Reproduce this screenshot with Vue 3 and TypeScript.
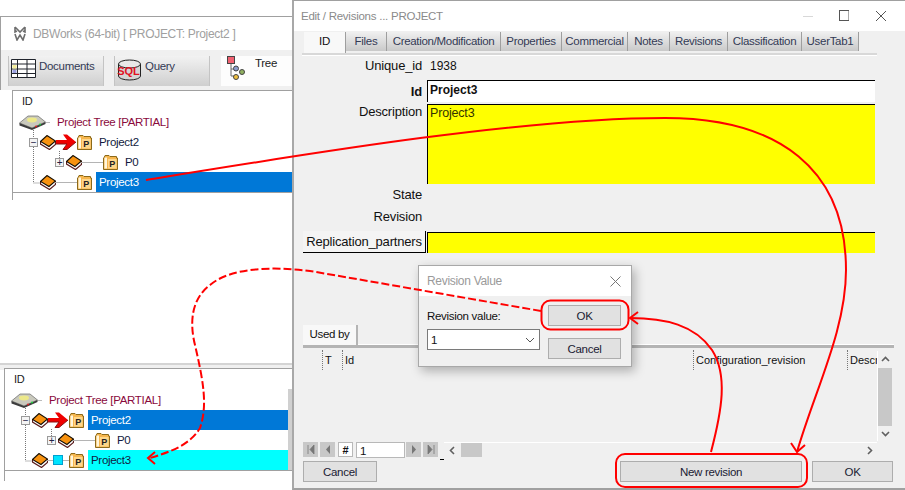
<script setup lang="ts">
type TreeRow = {
  label: string
  level: number
  expander?: '+' | '-'
  link: 'arrow' | 'line' | 'cyan'
  state?: 'selected' | 'marked'
}

const upperRows: TreeRow[] = [
  { label: 'Project2', level: 0, expander: '-', link: 'arrow' },
  { label: 'P0', level: 1, expander: '+', link: 'line' },
  { label: 'Project3', level: 0, link: 'line', state: 'selected' },
]

const lowerRows: TreeRow[] = [
  { label: 'Project2', level: 0, expander: '-', link: 'arrow', state: 'selected' },
  { label: 'P0', level: 1, expander: '+', link: 'line' },
  { label: 'Project3', level: 0, link: 'cyan', state: 'marked' },
]

const trees = [
  { key: 'upper', rows: upperRows },
  { key: 'lower', rows: lowerRows },
]

const tabs = [
  { label: 'ID', width: 42 },
  { label: 'Files', width: 41 },
  { label: 'Creation/Modification', width: 114 },
  { label: 'Properties', width: 61 },
  { label: 'Commercial', width: 66 },
  { label: 'Notes', width: 42 },
  { label: 'Revisions', width: 58 },
  { label: 'Classification', width: 74 },
  { label: 'UserTab1', width: 57 },
]
</script>

<template>
  <div class="screen">
    <!-- shared icons -->
    <svg class="sprite" aria-hidden="true">
      <defs>
        <symbol id="book" viewBox="0 0 16 15">
          <path d="M.5 6.500 V9 L9.500 14.500 L15.500 9.500 V6.500 Z" fill="#fff" stroke="#5a1c1c" stroke-width="1.200" />
          <path d="M.5 6.500 L7 .5 L15.500 6 L9 11.500 Z" fill="#f8920f" stroke="#140e04" stroke-width="1.100" />
        </symbol>
        <symbol id="folder" viewBox="0 0 15 15">
          <path d="M.5 3 V14.500 H14.500 V3 H13.500 V1.500 H7 L6 .5 H2 L1 3 Z" fill="#f6b64e" stroke="#8c6a1a" />
          <path d="M1.500 2.500 H4 V13.500 H1.500 Z" fill="#fff6dc" />
          <rect x="5" y="4" width="8.500" height="9.500" fill="#fdd68a" />
          <text x="9.200" y="12.300" text-anchor="middle" class="folder-p">P</text>
        </symbol>
        <symbol id="drive" viewBox="0 0 27 15">
          <path d="M.5 8 L9 1 H19 L26.500 7 L13 13 Z" fill="#c9c9bd" stroke="#666" stroke-width=".7" />
          <path d="M.5 8 L13 13 L26.500 7 V9 L13 15 L.5 10.500 Z" fill="#3c3c3c" />
          <ellipse cx="13" cy="5" rx="5" ry="2.400" fill="#ece88a" />
          <circle cx="17" cy="11.500" r="1" fill="#e02020" />
          <circle cx="21" cy="9.500" r="1" fill="#20d040" />
        </symbol>
      </defs>
    </svg>

    <!-- main application window, top left -->
    <section class="app-window">
      <header class="app-title">
        <svg class="logo" viewBox="0 0 14 15" width="14" height="15">
          <path d="M2 1 L7 6 L12 1 M2 1 V6 L4 5 M12 1 V6 L10 5 M2 8 L4 14 L7 9 L10 14 L12 8" fill="none" stroke="#6d6d6d" stroke-width="1.600" />
        </svg>
        <span>DBWorks (64-bit) [ PROJECT: Project2 ]</span>
      </header>
      <nav class="toolbar">
        <div class="tool">
          <svg viewBox="0 0 25 19" width="25" height="19">
            <path d="M.5 .5 H24.500 V18.500 H.5 Z M.5 5 H24.500 M.5 10 H24.500 M.5 14.500 H24.500 M6.500 .5 V18.500 M16 .5 V18.500" fill="#fff" stroke="#20242c" />
            <rect x="1.500" y="6" width="4" height="3.500" fill="#f4ee9a" />
            <rect x="1.500" y="11" width="4" height="3" fill="#9aa0e0" />
          </svg>
          <span>Documents</span>
        </div>
        <div class="tool">
          <svg viewBox="0 0 25 22" width="25" height="22">
            <ellipse cx="12.500" cy="17" rx="11" ry="4" fill="#d4d4d4" stroke="#222" />
            <rect x="1.500" y="5" width="22" height="12" fill="#d4d4d4" />
            <path d="M1.500 5 V17 M23.500 5 V17" stroke="#222" />
            <ellipse cx="12.500" cy="5" rx="11" ry="4" fill="#e8e8e8" stroke="#222" />
            <text x="11.500" y="16" text-anchor="middle" class="sql">SQL</text>
          </svg>
          <span>Query</span>
        </div>
        <div class="tool tool--active">
          <svg viewBox="0 0 18 26" width="18" height="26">
            <path d="M4 6 V20 H9 M4 13 H9" fill="none" stroke="#666" />
            <rect x=".5" y=".5" width="7" height="7" fill="#f06070" stroke="#444" />
            <circle cx="9" cy="12.500" r="2.500" fill="#8c9ccc" stroke="#444" />
            <circle cx="15" cy="16" r="2.500" fill="#90b060" stroke="#444" />
            <circle cx="9" cy="21" r="2.500" fill="#f0c040" stroke="#444" />
          </svg>
          <span>Tree</span>
        </div>
      </nav>
    </section>

    <!-- lower window frame, only the tree is visible -->
    <section class="lower-window"></section>

    <div v-for="tree in trees" :key="tree.key" class="tree-wrap" :class="`tree-wrap--${tree.key}`">
      <div class="tree">
        <div class="tree-head">ID</div>
        <div class="tree-root">
          <svg class="drive"><use href="#drive" /></svg>
          <i class="root-dash"></i>
          <span>Project Tree [PARTIAL]</span>
        </div>
        <div
          v-for="row in tree.rows"
          :key="row.label"
          class="tree-row"
          :style="{ paddingLeft: `${16 + row.level * 26}px` }"
        >
          <span class="expander" :class="{ 'expander--none': !row.expander }">
            <template v-if="row.expander">{{ row.expander === '-' ? '−' : '+' }}</template>
          </span>
          <svg class="book"><use href="#book" /></svg>
          <span class="link">
            <svg v-if="row.link === 'arrow'" viewBox="0 0 22 16" width="22" height="16">
              <path d="M1 6 H12 L8 0.5 L12 0.5 L21 8 L12 15.500 L8 15.500 L12 10 H1 Z" fill="#ee0000" />
              <path d="M1 10 H12 L8 15.500 L12 15.500 L21 8" fill="none" stroke="#8a1010" />
            </svg>
            <i v-else-if="row.link === 'line'" class="link-line"></i>
            <template v-else>
              <i class="link-dash"></i>
              <i class="link-cyan"></i>
              <i class="link-dash link-dash--after"></i>
            </template>
          </span>
          <svg class="folder"><use href="#folder" /></svg>
          <span class="tree-label" :class="row.state ? `tree-label--${row.state}` : ''">{{ row.label }}</span>
        </div>
        <svg class="tree-dots" width="70" height="102">
          <path d="M20.500 39 V47 M20.500 56 V92 H27 M46.500 60 V68" fill="none" stroke="#777" stroke-dasharray="1 1" />
        </svg>
      </div>
    </div>

    <!-- Edit / Revisions dialog -->
    <section class="edit-window">
      <header class="edit-title">
        <span>Edit / Revisions ... PROJECT</span>
        <div class="caption">
          <svg viewBox="0 0 46 12" width="46" height="12">
            <path d="M0 6.500 H10" stroke="#d8d8d8" />
            <rect x="36.500" y=".5" width="9.500" height="10" fill="none" stroke="#555" />
          </svg>
          <svg viewBox="0 0 12 12" width="12" height="12"><path d="M1 1 L11 11 M11 1 L1 11" stroke="#555" /></svg>
        </div>
      </header>

      <div class="tabs">
        <div
          v-for="(tab, i) in tabs"
          :key="tab.label"
          class="tab"
          :class="{ 'tab--active': i === 0 }"
          :style="{ width: `${tab.width}px` }"
        >{{ tab.label }}</div>
      </div>

      <div class="form">
        <label class="form-label form-label--first">Unique_id</label>
        <span class="form-value form-label--first">1938</span>
        <label class="form-label"><b>Id</b></label>
        <div class="field field--id">Project3</div>
        <label class="form-label form-label--desc">Description</label>
        <div class="field field--desc">Project3</div>
        <label class="form-label">State</label>
        <span></span>
        <label class="form-label">Revision</label>
        <span></span>
        <button class="partners">Replication_partners</button>
        <div class="field field--partners"></div>
      </div>

      <div class="used-tabs"><div class="used-tab">Used by</div></div>

      <div class="grid-area">
        <div class="grid-body">
          <div class="grid-head">
            <span class="col" style="width: 20px">T</span>
            <span class="col" style="width: 351px">Id</span>
            <span class="col" style="width: 154px">Configuration_revision</span>
            <span class="col col--last">Descr</span>
          </div>
        </div>
        <div class="vscroll">
          <svg viewBox="0 0 9 6" width="9" height="6"><path d="M1 5 L4.500 1.500 L8 5" fill="none" stroke="#606060" stroke-width="1.600" /></svg>
          <i class="vthumb"></i>
          <svg viewBox="0 0 9 6" width="9" height="6"><path d="M1 1 L4.500 4.500 L8 1" fill="none" stroke="#606060" stroke-width="1.600" /></svg>
        </div>
      </div>

      <div class="nav-row">
        <button class="nav-btn"><svg viewBox="0 0 8 9" width="8" height="9"><path d="M1 0 V9 M7 0 L3 4.500 L7 9 Z" fill="#777" stroke="#777" stroke-width=".8" /></svg></button>
        <button class="nav-btn nav-btn--prev"><svg viewBox="0 0 6 9" width="6" height="9"><path d="M5 0 L1 4.500 L5 9 Z" fill="#777" /></svg></button>
        <span class="nav-hash">#</span>
        <span class="nav-input">1</span>
        <button class="nav-btn"><svg viewBox="0 0 6 9" width="6" height="9"><path d="M1 0 L5 4.500 L1 9 Z" fill="#777" /></svg></button>
        <button class="nav-btn nav-btn--last"><svg viewBox="0 0 8 9" width="8" height="9"><path d="M7 0 V9 M1 0 L5 4.500 L1 9 Z" fill="#777" stroke="#777" stroke-width=".8" /></svg></button>
        <i class="nav-tick"></i>
        <div class="hscroll">
          <svg viewBox="0 0 6 9" width="6" height="9"><path d="M5 1 L1.500 4.500 L5 8" fill="none" stroke="#606060" stroke-width="1.600" /></svg>
          <i class="hthumb"></i>
          <svg class="hscroll-end" viewBox="0 0 6 9" width="6" height="9"><path d="M1 1 L4.500 4.500 L1 8" fill="none" stroke="#606060" stroke-width="1.600" /></svg>
        </div>
      </div>

      <footer class="edit-actions">
        <button class="btn btn--cancel">Cancel</button>
        <button class="btn btn--new">New revision</button>
        <button class="btn btn--ok">OK</button>
      </footer>
    </section>

    <!-- Revision Value popup -->
    <section class="rev-dialog">
      <header class="rev-title">
        <span>Revision Value</span>
        <svg viewBox="0 0 11 11" width="11" height="11"><path d="M.5 .5 L10.500 10.500 M10.500 .5 L.5 10.500" stroke="#777" /></svg>
      </header>
      <div class="rev-body">
        <div class="rev-left">
          <label>Revision value:</label>
          <div class="combo">
            <span>1</span>
            <svg viewBox="0 0 10 6" width="10" height="6"><path d="M1 1 L5 5 L9 1" fill="none" stroke="#555" /></svg>
          </div>
        </div>
        <div class="rev-right">
          <button class="btn rev-btn">OK</button>
          <button class="btn rev-btn">Cancel</button>
        </div>
      </div>
    </section>

    <!-- red annotations on top of everything -->
    <svg class="annotations" viewBox="0 0 905 490" width="905" height="490">
      <g fill="none" stroke="#f00" stroke-width="2">
        <path d="M146 180 C300 155 520 118 665 118 C780 118 846 170 846 270 C846 330 815 390 797 452" />
        <path d="M791 443 L797 452 L805 445" />
        <path d="M711 452 C722 410 728 375 712 350 C695 325 665 318 630 318" />
        <path d="M638 312 L630 318 L638 324" />
        <path stroke-dasharray="8 3" d="M541 311 L310 271 C270 266 230 268 210 285 C190 300 190 325 195 345 C203 380 208 405 200 428 C190 445 170 452 150 458" />
        <path d="M155 452 L148 458 L155 464" />
        <rect x="541.500" y="300.500" width="87" height="29" rx="9" />
        <rect x="616" y="454" width="191" height="33" rx="9" />
      </g>
    </svg>
  </div>
</template>

<style>
body { background: #fff; }
</style>

<style scoped>
.screen {
  position: relative;
  width: 905px;
  height: 490px;
  overflow: hidden;
  background: #fff;
  font-family: "Liberation Sans", Arial, sans-serif;
  font-size: 11.5px;
  letter-spacing: -0.3px;
  color: #111;
}
.sprite { position: absolute; width: 0; height: 0; }
.folder-p { font: 700 9px "Liberation Sans", sans-serif; fill: #222; letter-spacing: 0; }
.sql { font: 700 11px "Liberation Sans", sans-serif; fill: #e01020; letter-spacing: 0; }

/* left windows */
.app-window {
  position: absolute;
  left: 0;
  top: 16px;
  width: 293px;
  height: 74px;
  border-top: 1px solid #a0a0a0;
  border-left: 1px solid #a0a0a0;
  box-sizing: border-box;
  background: #f0f0f0;
}
.app-title {
  display: flex;
  align-items: center;
  gap: 6px;
  height: 33px;
  padding-left: 12px;
  background: #fff;
  color: #a0a0a0;
  font-size: 12px;
}
.toolbar { display: flex; padding: 6px 0 0 7px; gap: 10px; }
.tool {
  display: flex;
  gap: 3px;
  width: 96px;
  height: 30px;
  padding: 3px 0 0 2px;
  box-sizing: border-box;
  background: linear-gradient(#f2f2f2, #cfcfcf);
  border-left: 1px solid #c4c4c4;
  border-right: 1px solid #c4c4c4;
  color: #333a55;
}
.tool span { padding-top: 1px; }
.tool--active { width: 72px; background: #fdfdfd; border: 0; gap: 10px; margin-left: 1px; padding: 0 0 0 6px; color: #222; }
.lower-window {
  position: absolute;
  left: 0;
  top: 363px;
  width: 293px;
  height: 5px;
  border-top: 2px solid #d4d4d4;
  background: #f0f0f0;
}
.tree-wrap {
  position: absolute;
  border-left: 1px solid #a0a0a0;
  box-sizing: border-box;
}
.tree-wrap--upper { left: 12px; top: 90px; width: 281px; height: 110px; }
.tree-wrap--lower { left: 4px; top: 368px; width: 288px; height: 113px; }
.tree {
  position: relative;
  border-top: 1px solid #a0a0a0;
  border-bottom: 1px solid #a0a0a0;
  background: #fff;
}
.tree-wrap--lower::after {
  content: "";
  position: absolute;
  right: 0;
  top: 21px;
  bottom: 11px;
  width: 4px;
  background: #d0d0d0;
}
.tree-head { height: 21px; padding-left: 9px; line-height: 21px; color: #222; font-size: 11px; }
.tree-root {
  display: flex;
  align-items: center;
  height: 20px;
  padding-left: 6px;
  color: #8a0a3c;
}
.drive { width: 27px; height: 15px; flex: none; }
.root-dash { width: 4px; height: 1px; margin-right: 7px; background: #bbb; }
.tree-row { display: flex; align-items: center; height: 20px; box-sizing: border-box; }
.expander {
  flex: none;
  width: 9px;
  height: 9px;
  margin-right: 2px;
  border: 1px solid #9a9a9a;
  box-sizing: border-box;
  font: 10px/7px "Liberation Sans", sans-serif;
  text-align: center;
  color: #224;
  background: #f4f4f4;
}
.expander--none { visibility: hidden; }
.book { width: 16px; height: 15px; flex: none; margin-right: -1px; }
.link { display: flex; align-items: center; width: 22px; height: 20px; flex: none; }
.link-line { width: 22px; height: 1px; background: #b4b4b4; }
.link-dash { width: 6px; height: 1px; background: #b4b4b4; }
.link-dash--after { width: 6px; }
.link-cyan {
  width: 10px;
  height: 10px;
  background: #00e4ff;
  border: 1px solid #00a0d0;
  box-sizing: border-box;
}
.folder { width: 15px; height: 15px; flex: none; margin-right: 4px; }
.tree-label { flex: 1; height: 20px; padding-left: 3px; line-height: 20px; color: #111a40; }
.tree-label--selected { background: #0078d7; color: #fff; }
.tree-label--marked { background: #00ffff; margin-right: 4px; }
.tree-dots { position: absolute; left: 0; top: 0; pointer-events: none; }

/* edit window */
.edit-window {
  position: absolute;
  left: 292px;
  top: 0;
  width: 613px;
  height: 490px;
  display: flex;
  flex-direction: column;
  border-left: 2px solid #a8a8a8;
  border-top: 1px solid #a0a0a0;
  border-bottom: 2px solid #a0a0a0;
  box-sizing: border-box;
  background: #f0f0f0;
}
.edit-title {
  display: flex;
  align-items: center;
  justify-content: space-between;
  height: 30px;
  flex: none;
  padding: 0 18px 0 7px;
  background: #fff;
  color: #8a8a8a;
  font-size: 11.5px;
  letter-spacing: -0.25px;
}
.caption { display: flex; gap: 26px; }
.tabs {
  display: flex;
  flex: none;
  height: 21px;
  width: 573px;
  margin: 1px 30px 0 8px;
  padding-left: 2px;
  border-bottom: 2px solid #d8d8d8;
  box-shadow: 0 1px 0 #fff;
}
.tab {
  height: 19px;
  line-height: 19px;
  text-align: center;
  white-space: nowrap;
  background: linear-gradient(#f0f0f0, #c9c9c9);
  border-right: 1px solid #9e9e9e;
  box-sizing: border-box;
  color: #333a55;
}
.tab--active { background: #f8f8f8; height: 21px; color: #111; }
.form {
  display: grid;
  grid-template-columns: 128px 448px;
  column-gap: 5px;
  align-items: center;
  flex: none;
  width: 581px;
  font-size: 13px;
  letter-spacing: -0.18px;
}
.form-label { text-align: right; height: 22px; line-height: 22px; }
.form-label--first { margin-bottom: 3px; }
.form-label--desc { align-self: start; height: 16px; line-height: 16px; }
.form-value { height: 22px; line-height: 22px; padding-left: 3px; font-size: 12px; letter-spacing: 0; }
.field {
  box-sizing: border-box;
  border-top: 1px solid #000;
  border-left: 1px solid #000;
  padding: 2px 0 0 2px;
}
.field--id { height: 22px; margin-bottom: 2px; background: #fff; font-weight: 700; font-size: 12px; letter-spacing: 0; line-height: 14px; }
.field--desc { height: 80px; background: #ff0; color: #333300; font-size: 12.5px; line-height: 14px; padding-top: 1px; }
.field--partners { height: 21px; margin-top: 3px; background: #ff0; }
.partners {
  grid-column: 1;
  justify-self: start;
  width: 123px;
  height: 22px;
  margin: 3px 0 0 9px;
  padding: 0;
  border: 0;
  border-right: 1px solid #000;
  border-bottom: 1px solid #000;
  background: #f4f4f4;
  font: inherit;
  letter-spacing: inherit;
  white-space: nowrap;
  color: #111;
}
.used-tabs {
  flex: none;
  height: 20px;
  margin: 72px 11px 0 9px;
  border-bottom: 3px solid #b4b4b4;
  box-shadow: inset 0 -1px 0 #fff;
}
.used-tab {
  width: 55px;
  height: 20px;
  line-height: 19px;
  text-align: center;
  background: #f8f8f8;
  border-right: 2px solid #b4b4b4;
  box-sizing: border-box;
}
.grid-area {
  display: flex;
  flex: none;
  height: 94px;
  margin-left: 9px;
}
.grid-body { width: 574px; overflow: hidden; }
.grid-head { display: flex; height: 20px; margin-top: 2px; padding-left: 19px; }
.col {
  flex: none;
  height: 20px;
  padding-left: 2px;
  line-height: 20px;
  box-sizing: border-box;
  border-left: 1px dotted #777;
  font-size: 11px;
  letter-spacing: 0;
  white-space: nowrap;
}
.vscroll {
  display: flex;
  flex-direction: column;
  align-items: center;
  justify-content: space-between;
  width: 15px;
  height: 90px;
  margin-top: 3px;
  padding: 5px 0 4px;
  box-sizing: border-box;
  border-left: 1px solid #fff;
}
.vthumb { width: 100%; height: 58px; background: #c8c8c8; }
.nav-row { display: flex; flex: none; align-items: flex-start; height: 19px; margin-left: 9px; }
.nav-btn {
  display: flex;
  align-items: center;
  justify-content: center;
  flex: none;
  width: 15px;
  height: 15px;
  padding: 0;
  border: 0;
  background: #c8c8c8;
  margin-right: 2px;
}
.nav-btn--prev { margin-right: 3px; }
.nav-hash {
  flex: none;
  width: 15px;
  height: 15px;
  margin-right: 3px;
  line-height: 15px;
  text-align: center;
  background: #fff;
  border: 1px solid #b8b8b8;
  box-sizing: border-box;
  font-weight: 700;
  font-size: 11px;
}
.nav-input {
  flex: none;
  width: 49px;
  height: 16px;
  line-height: 16px;
  padding-left: 3px;
  margin-right: 1px;
  background: #fff;
  border: 1px solid #b8b8b8;
  box-sizing: border-box;
}
.nav-tick { flex: none; width: 4px; height: 1px; margin-top: 17px; background: #000; }
.hscroll {
  display: flex;
  flex: none;
  align-items: center;
  width: 433px;
  height: 15px;
  padding-left: 5px;
  box-sizing: border-box;
  border-top: 1px solid #fff;
}
.hthumb { width: 21px; height: 14px; margin-left: 6px; background: #c8c8c8; }
.hscroll-end { margin-left: auto; margin-right: 4px; }
.edit-actions { display: flex; flex: none; height: 21px; margin-left: 9px; }
.btn {
  height: 21px;
  padding: 0;
  border: 1px solid #adadad;
  box-sizing: border-box;
  background: #e1e1e1;
  font: inherit;
  letter-spacing: inherit;
  color: #1a1a33;
}
.btn--cancel { width: 74px; }
.btn--new { width: 182px; margin-left: 243px; }
.btn--ok { width: 81px; margin-left: 10px; }

/* revision dialog */
.rev-dialog {
  position: absolute;
  left: 418px;
  top: 265px;
  width: 214px;
  height: 102px;
  box-sizing: border-box;
  border: 1px solid #a8a8a8;
  background: #f0f0f0;
  box-shadow: 3px 4px 10px rgba(0, 0, 0, 0.28);
}
.rev-title {
  display: flex;
  align-items: center;
  justify-content: space-between;
  height: 30px;
  padding: 0 10px 0 8px;
  background: #fff;
  color: #9a9a9a;
  font-size: 12px;
}
.rev-body { display: flex; padding: 9px 10px 0 8px; justify-content: space-between; }
.rev-left { display: flex; flex-direction: column; gap: 7px; padding-top: 5px; }
.combo {
  display: flex;
  align-items: center;
  justify-content: space-between;
  width: 113px;
  height: 21px;
  padding: 0 4px 0 3px;
  box-sizing: border-box;
  background: #fff;
  border: 1px solid #7a7a7a;
}
.rev-right { display: flex; flex-direction: column; gap: 12px; }
.rev-btn { width: 73px; }

.annotations { position: absolute; left: 0; top: 0; pointer-events: none; }
</style>
